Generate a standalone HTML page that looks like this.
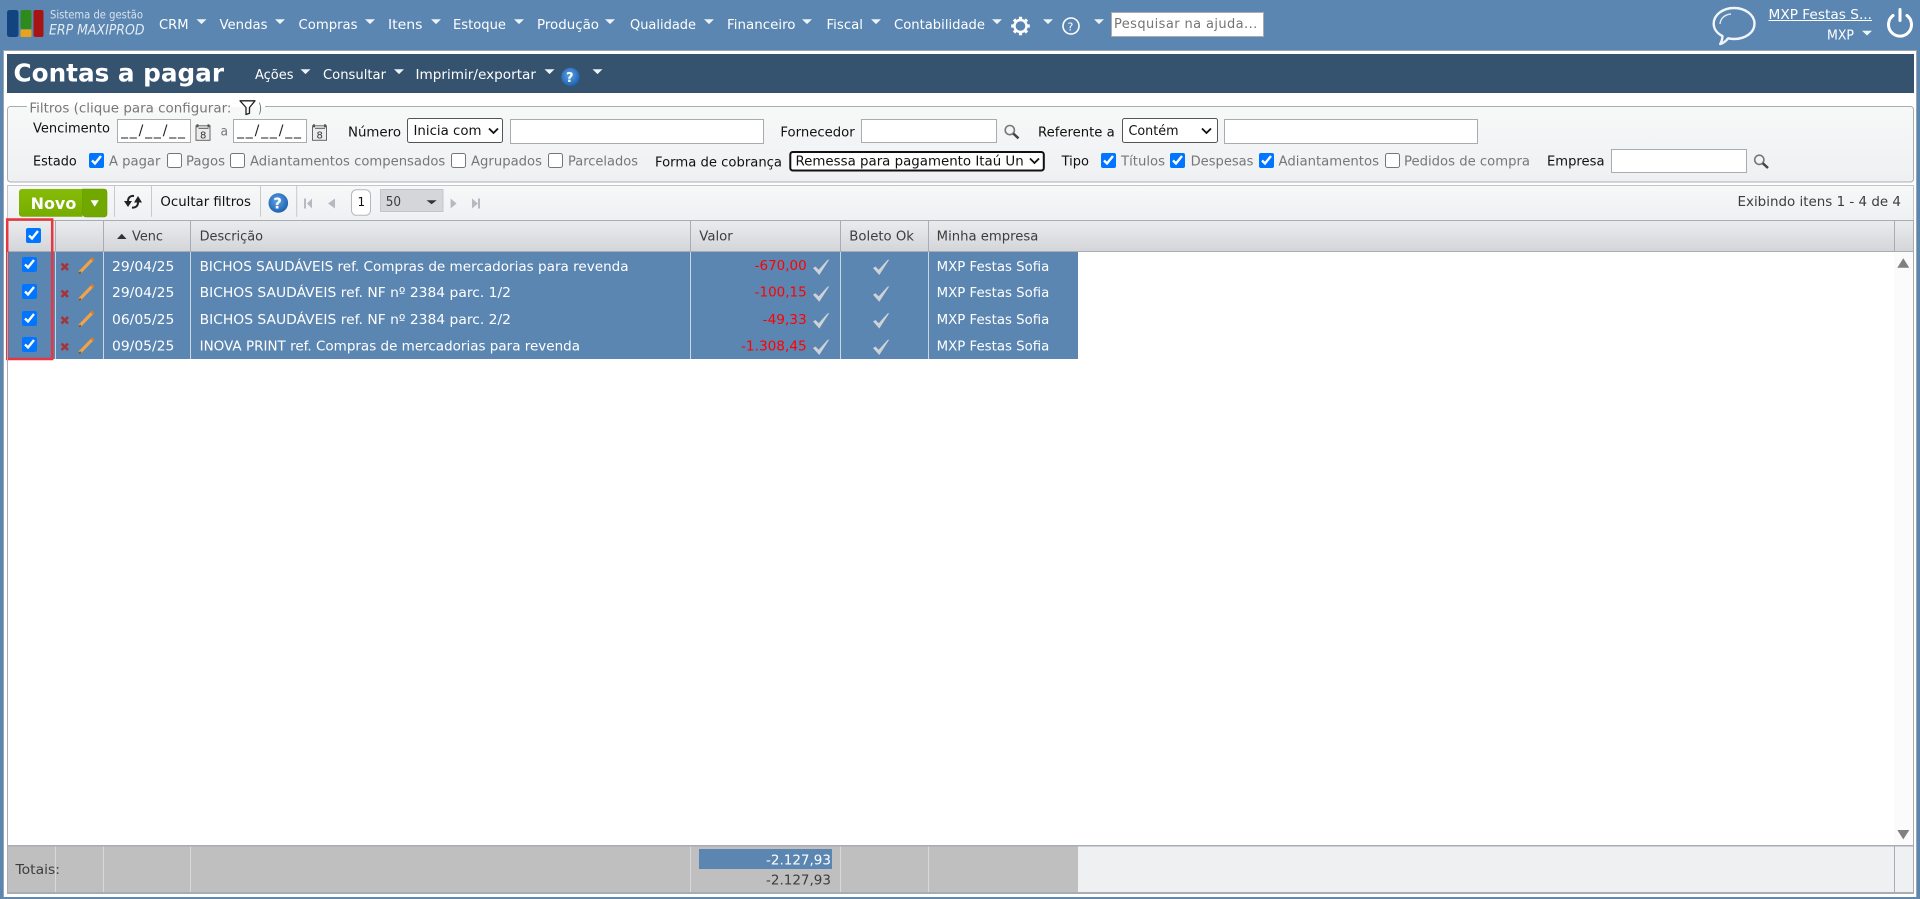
<!DOCTYPE html>
<html lang="pt-BR"><head><meta charset="utf-8"><title>Contas a pagar</title>
<style>
html,body{margin:0;padding:0;background:#5b86b2;width:1920px;height:899px;overflow:hidden}
#s{position:absolute;left:0;top:0}
text{font-family:"DejaVu Sans","Liberation Sans",sans-serif;font-size:13px}
.w{fill:#fff}.k{fill:#111}.g{fill:#777}.d{fill:#3d3d3d}.r{fill:#ff0000}
input{position:absolute;margin:0;box-sizing:border-box}
input[type=checkbox]{width:15px;height:15px}
input.i{background:#fff;border:1px solid #a9abae;border-radius:0;outline:0;padding:0 3px;font:13px "DejaVu Sans",sans-serif;color:#222}
</style></head><body>
<svg id="s" width="1920" height="899" viewBox="0 0 1920 899" xmlns="http://www.w3.org/2000/svg">
<defs>
<linearGradient id="hd" x1="0" y1="0" x2="0" y2="1"><stop offset="0" stop-color="#ebecee"/><stop offset="1" stop-color="#d3d5d9"/></linearGradient>
<linearGradient id="fs" x1="0" y1="0" x2="0" y2="1"><stop offset="0" stop-color="#f7f8f8"/><stop offset="1" stop-color="#eff0f2"/></linearGradient>
<radialGradient id="hb" cx=".45" cy=".4" r=".6"><stop offset="0" stop-color="#5fa3e6"/><stop offset="1" stop-color="#1c62b0"/></radialGradient>
<linearGradient id="gn" x1="0" y1="0" x2="0" y2="1"><stop offset="0" stop-color="#86bc06"/><stop offset="1" stop-color="#76ac00"/></linearGradient>
<filter id="bl" x="-20%" y="-20%" width="140%" height="140%"><feGaussianBlur stdDeviation=".35"/></filter>
<g id="ar"><path d="M0 0h10l-5 4.800z" fill="#eef3f8"/></g>
<g id="cal"><rect x=".5" y="1.500" width="14" height="14.500" fill="#ececec" stroke="#666"/><rect x="1" y="0" width="2" height="3" fill="#555"/><rect x="12" y="0" width="2" height="3" fill="#555"/><path d="M3 4h10" stroke="#555" stroke-width="1"/><text x="4.500" y="14" style="font-size:10px" fill="#333">8</text></g>
<g id="mag"><circle cx="5.800" cy="5.800" r="4.600" fill="#f3f6f8" stroke="#777" stroke-width="1.600"/><path d="M9.300 9.300l5.200 4.700" stroke="#444" stroke-width="2.500"/></g>
<g id="x"><path d="M1 1l6.500 6.500M7.500 1L1 7.500" stroke="#a5343a" stroke-width="2.600"/></g>
<g id="pen"><path d="M1.500 15L15 1" stroke="#f0a348" stroke-width="3.200"/><path d="M1 15.500l2-1" stroke="#7a5a30" stroke-width="2"/><path d="M13.600 2.400L15.400 .6" stroke="#e2791c" stroke-width="3"/></g>
<g id="tk"><path d="M.5 9.500l2.500-1.500 3.200 3.200L15 1.500l1.800-.5L6.800 16.500z" fill="#cfd2d6" filter="url(#bl)"/></g>
</defs>
<rect width="1920" height="899" fill="#5b86b2"/>
<rect x="4" y="50" width="1913" height="847" fill="#fff"/>
<rect x="3.500" y="50.500" width="1913" height="847" fill="none" stroke="#9aa5b0"/>
<rect y="897" width="1920" height="2" fill="#6288ad"/>

<!-- logo -->
<rect x="7" y="10" width="11.500" height="27" rx="2.500" fill="#12457f"/>
<rect x="20.500" y="10" width="11" height="19" rx="2" fill="#2f8a1e"/>
<rect x="20.500" y="29.500" width="11" height="7.500" rx="1" fill="#e4a51c"/>
<rect x="33.500" y="10" width="10" height="27" rx="2" fill="#a81414"/>
<text x="50" y="18.500" textLength="93" lengthAdjust="spacingAndGlyphs" style="font-size:11.500px" fill="#d7e2ec">Sistema de gestão</text>
<text x="49" y="34.500" textLength="95.500" lengthAdjust="spacingAndGlyphs" style="font-size:14px;font-style:italic" fill="#e4ecf3">ERP MAXIPROD</text>

<!-- menu -->
<g class="w">
<text x="159" y="29" textLength="29.500" lengthAdjust="spacingAndGlyphs">CRM</text>
<text x="219.500" y="29" textLength="48" lengthAdjust="spacingAndGlyphs">Vendas</text>
<text x="298.500" y="29" textLength="59" lengthAdjust="spacingAndGlyphs">Compras</text>
<text x="388" y="29" textLength="34.500" lengthAdjust="spacingAndGlyphs">Itens</text>
<text x="453" y="29" textLength="53" lengthAdjust="spacingAndGlyphs">Estoque</text>
<text x="537" y="29" textLength="62" lengthAdjust="spacingAndGlyphs">Produção</text>
<text x="630" y="29" textLength="66" lengthAdjust="spacingAndGlyphs">Qualidade</text>
<text x="727" y="29" textLength="68.500" lengthAdjust="spacingAndGlyphs">Financeiro</text>
<text x="826.500" y="29" textLength="36.500" lengthAdjust="spacingAndGlyphs">Fiscal</text>
<text x="894" y="29" textLength="91" lengthAdjust="spacingAndGlyphs">Contabilidade</text>
</g>
<use href="#ar" x="196.500" y="19.300"/><use href="#ar" x="275" y="19.300"/><use href="#ar" x="365" y="19.300"/><use href="#ar" x="431" y="19.300"/><use href="#ar" x="514" y="19.300"/><use href="#ar" x="605" y="19.300"/><use href="#ar" x="704" y="19.300"/><use href="#ar" x="802" y="19.300"/><use href="#ar" x="871" y="19.300"/><use href="#ar" x="992" y="19.300"/><use href="#ar" x="1043" y="19.300"/><use href="#ar" x="1094" y="19.300"/>
<!-- gear -->
<circle cx="1020.500" cy="26" r="6" fill="none" stroke="#fff" stroke-width="2.400"/>
<g stroke="#fff" stroke-width="3.200"><path d="M1020.500 16.700v3.600M1020.500 31.700v3.600M1011.200 26h3.600M1026.200 26h3.600M1014 19.500l2.500 2.500M1024.500 30l2.500 2.500M1014 32.500l2.500-2.500M1024.500 22l2.500-2.500"/></g>
<!-- help -->
<circle cx="1071" cy="26" r="8" fill="none" stroke="#fff" stroke-width="1.600"/>
<text x="1067.500" y="30.500" style="font-size:11px" class="w">?</text>
<!-- chat -->
<path d="M1734 8c11.500 0 20.500 7 20.500 15.700S1745.500 39 1734 39c-2 0-4-.2-5.800-.7-2 2.500-5 5-8 5.700 1.200-2 2.200-5 2.200-8-5.500-2.800-8.700-7.300-8.700-12.300C1713.700 15 1722.500 8 1734 8z" fill="none" stroke="#f1f5f9" stroke-width="2.400" stroke-linejoin="round"/>
<path d="M1720 24c.5-6 5-9.500 11-10" fill="none" stroke="#dfe8f0" stroke-width="1.400"/>
<!-- user -->
<text x="1768.500" y="19" textLength="103.500" lengthAdjust="spacingAndGlyphs" class="w">MXP Festas S...</text>
<rect x="1768.500" y="20" width="103.500" height="1" fill="#fff"/>
<text x="1827" y="39.300" textLength="27" lengthAdjust="spacingAndGlyphs" class="w">MXP</text>
<use href="#ar" x="1862" y="30.700"/>
<!-- power -->
<path d="M1893 15.500a11.500 11.500 0 1 0 14 0" fill="none" stroke="#fff" stroke-width="3" stroke-linecap="round"/>
<path d="M1900 9.500v11" stroke="#fff" stroke-width="3" stroke-linecap="round"/>

<!-- title bar -->
<rect x="7" y="54" width="1907" height="39" fill="#35526f"/>
<text x="13.500" y="81.700" textLength="210.500" lengthAdjust="spacingAndGlyphs" style="font-size:25px;font-weight:bold" class="w">Contas a pagar</text>
<text x="255" y="79" textLength="38.500" lengthAdjust="spacingAndGlyphs" class="w">Ações</text>
<text x="323" y="79" textLength="63" lengthAdjust="spacingAndGlyphs" class="w">Consultar</text>
<text x="415.500" y="79" textLength="120.500" lengthAdjust="spacingAndGlyphs" class="w">Imprimir/exportar</text>
<use href="#ar" x="300.500" y="69.300"/><use href="#ar" x="394" y="69.300"/><use href="#ar" x="544.500" y="69.300"/><use href="#ar" x="592.500" y="69.300"/>
<circle cx="570.500" cy="77" r="9.200" fill="url(#hb)"/>
<text x="566" y="82" style="font-size:13px;font-weight:bold" class="w">?</text>

<!-- filters -->
<rect x="7.500" y="106.500" width="1906" height="75.500" rx="3" fill="url(#fs)" stroke="#a8adb5"/>
<rect x="27" y="100" width="238" height="8" fill="#fff"/>
<rect x="27" y="107" width="238" height="8" fill="#f7f8f8"/>
<text x="29.400" y="112.700" textLength="202" lengthAdjust="spacingAndGlyphs" class="g">Filtros (clique para configurar:</text>
<path d="M240 100.800h15l-5.500 6.700v5.800l-3.500 1.200v-7z" fill="none" stroke="#222" stroke-width="1.300" stroke-linejoin="round"/>
<text x="258" y="112.700" textLength="4" lengthAdjust="spacingAndGlyphs" class="g">)</text>
<text x="33" y="132.700" textLength="77" lengthAdjust="spacingAndGlyphs" class="k">Vencimento</text>
<use href="#cal" x="195.500" y="124.300"/>
<text x="220.500" y="135.700" textLength="7.500" lengthAdjust="spacingAndGlyphs" class="g">a</text>
<use href="#cal" x="312" y="124.300"/>
<text x="348" y="136.700" textLength="53" lengthAdjust="spacingAndGlyphs" class="k">Número</text>
<text x="780.400" y="136.700" textLength="74.300" lengthAdjust="spacingAndGlyphs" class="k">Fornecedor</text>
<use href="#mag" x="1004" y="124.300"/>
<text x="1038" y="136.700" textLength="76.700" lengthAdjust="spacingAndGlyphs" class="k">Referente a</text>
<!-- select: Inicia com -->
<rect x="407.500" y="118.500" width="95" height="24" rx="2" fill="#fff" stroke="#555"/>
<text x="413.500" y="135" textLength="68" lengthAdjust="spacingAndGlyphs" class="k">Inicia com</text>
<path d="M489 128.500l4.500 4.500 4.500-4.500" fill="none" stroke="#111" stroke-width="1.800"/>
<!-- select: Contém -->
<rect x="1122.500" y="118.500" width="95" height="24" rx="2" fill="#fff" stroke="#555"/>
<text x="1128.500" y="135" textLength="50" lengthAdjust="spacingAndGlyphs" class="k">Contém</text>
<path d="M1202 128.500l4.500 4.500 4.500-4.500" fill="none" stroke="#111" stroke-width="1.800"/>

<text x="33" y="165.700" textLength="43.700" lengthAdjust="spacingAndGlyphs" class="k">Estado</text>
<text x="109" y="165.700" textLength="51.400" lengthAdjust="spacingAndGlyphs" class="g">A pagar</text>
<text x="186" y="165.700" textLength="39" lengthAdjust="spacingAndGlyphs" class="g">Pagos</text>
<text x="250" y="165.700" textLength="195.300" lengthAdjust="spacingAndGlyphs" class="g">Adiantamentos compensados</text>
<text x="471" y="165.700" textLength="71" lengthAdjust="spacingAndGlyphs" class="g">Agrupados</text>
<text x="568" y="165.700" textLength="70" lengthAdjust="spacingAndGlyphs" class="g">Parcelados</text>
<text x="655" y="166.700" textLength="127" lengthAdjust="spacingAndGlyphs" class="k">Forma de cobrança</text>
<!-- select: forma -->
<rect x="790.300" y="152" width="253.500" height="18.500" rx="2.500" fill="#fff" stroke="#101010" stroke-width="2"/>
<text x="795.500" y="165.500" textLength="228.200" lengthAdjust="spacingAndGlyphs" class="k">Remessa para pagamento Itaú Un</text>
<path d="M1030 158.500l4.500 4.500 4.500-4.500" fill="none" stroke="#111" stroke-width="1.800"/>
<text x="1061.600" y="165.700" textLength="27.400" lengthAdjust="spacingAndGlyphs" class="k">Tipo</text>
<text x="1121" y="165.700" textLength="44" lengthAdjust="spacingAndGlyphs" class="g">Títulos</text>
<text x="1190.600" y="165.700" textLength="62.900" lengthAdjust="spacingAndGlyphs" class="g">Despesas</text>
<text x="1278.500" y="165.700" textLength="100.500" lengthAdjust="spacingAndGlyphs" class="g">Adiantamentos</text>
<text x="1404" y="165.700" textLength="126" lengthAdjust="spacingAndGlyphs" class="g">Pedidos de compra</text>
<text x="1547" y="165.700" textLength="57.500" lengthAdjust="spacingAndGlyphs" class="k">Empresa</text>
<use href="#mag" x="1753.500" y="154"/>

<!-- toolbar -->
<rect x="7.500" y="185.500" width="1906" height="35" fill="url(#fs)" stroke="#c2c6cc"/>
<path d="M19 192a3 3 0 0 1 3-3h60.500v27.700H22a3 3 0 0 1-3-3z" fill="url(#gn)"/>
<path d="M82.500 189H104a3 3 0 0 1 3 3v22a3 3 0 0 1-3 3H86a3.500 3.500 0 0 1-3.500-3.500z" fill="#70a800" stroke="#689d00" stroke-width=".6"/>
<text x="30.600" y="209" textLength="45.700" lengthAdjust="spacingAndGlyphs" style="font-size:16px;font-weight:bold" class="w">Novo</text>
<path d="M90.600 200.300h8.200l-4.100 6.500z" fill="#fff"/>
<g stroke="#c6c9ce"><path d="M114.500 185v31.700M151.500 185v31.700M260.500 185v31.700M296.700 185v31.700"/></g>
<!-- refresh -->
<path d="M128 201c0-3.500 2.500-5.500 6-5" fill="none" stroke="#222" stroke-width="2"/>
<path d="M124 201h8l-4 6z" fill="#222"/>
<path d="M138 202.500c0 3.500-2.500 5.500-6 5" fill="none" stroke="#222" stroke-width="2"/>
<path d="M134 202.500h8l-4-6.500z" fill="#222"/>
<text x="160.400" y="206" textLength="90.600" lengthAdjust="spacingAndGlyphs" class="k">Ocultar filtros</text>
<circle cx="278.300" cy="203" r="9.800" fill="url(#hb)"/>
<text x="273.300" y="208.500" style="font-size:15px;font-weight:bold" class="w">?</text>
<g fill="#b6bac0"><rect x="304" y="198.500" width="2" height="10"/><path d="M312 198.500v10l-5-5zM335 198.500v10l-7-5z"/><path d="M450.600 198.500v10l6-5zM472 198.500v10l6-5z"/><rect x="478" y="198.500" width="2" height="10"/></g>
<rect x="351.500" y="189.800" width="19" height="25.500" rx="5" fill="#fff" stroke="#b5b8bc"/>
<text x="357.500" y="206" class="k" style="font-size:12px">1</text>
<rect x="380.500" y="189.500" width="62.500" height="22" fill="#d4d6da" stroke="#c3c5c9"/>
<text x="385.700" y="206" textLength="15.300" lengthAdjust="spacingAndGlyphs" class="d">50</text>
<path d="M426.500 200.300h10.200l-5.100 4z" fill="#333"/>
<text x="1737.500" y="206" textLength="163.500" lengthAdjust="spacingAndGlyphs" class="d">Exibindo itens 1 - 4 de 4</text>

<!-- table header -->
<rect x="7.500" y="220.500" width="1906" height="31" fill="url(#hd)" stroke="#a8adb5"/>
<g stroke="#a8adb5"><path d="M55.500 221v30M103.500 221v30M190.500 221v30M690.500 221v30M840.500 221v30M928.500 221v30M1894.500 221v30"/></g>
<path d="M117 239h9.500l-4.750-5.300z" fill="#333"/>
<text x="132" y="240.700" textLength="31" lengthAdjust="spacingAndGlyphs" class="d">Venc</text>
<text x="199.600" y="240.700" textLength="63.400" lengthAdjust="spacingAndGlyphs" class="d">Descrição</text>
<text x="699.300" y="240.700" textLength="33.400" lengthAdjust="spacingAndGlyphs" class="d">Valor</text>
<text x="849.300" y="240.700" textLength="64.700" lengthAdjust="spacingAndGlyphs" class="d">Boleto Ok</text>
<text x="936.700" y="240.700" textLength="101.600" lengthAdjust="spacingAndGlyphs" class="d">Minha empresa</text>

<!-- rows -->
<rect x="8" y="252" width="1070" height="107" fill="#5b86b2"/>
<rect x="1894" y="252" width="19" height="593" fill="#fbfbfb"/>
<g stroke="#ccd6e0"><path d="M55.500 252v107M103.500 252v107M190.500 252v107M690.500 252v107M840.500 252v107M928.500 252v107"/></g>
<use href="#x" x="60.500" y="262.500"/><use href="#x" x="60.500" y="289.500"/><use href="#x" x="60.500" y="316"/><use href="#x" x="60.500" y="342.500"/>
<use href="#pen" x="78" y="257.700"/><use href="#pen" x="78" y="284.400"/><use href="#pen" x="78" y="311"/><use href="#pen" x="78" y="337.700"/>
<g class="w">
<text x="112" y="271" textLength="62.300" lengthAdjust="spacingAndGlyphs">29/04/25</text>
<text x="112" y="297" textLength="62.300" lengthAdjust="spacingAndGlyphs">29/04/25</text>
<text x="112" y="324" textLength="62.300" lengthAdjust="spacingAndGlyphs">06/05/25</text>
<text x="112" y="350.700" textLength="62.300" lengthAdjust="spacingAndGlyphs">09/05/25</text>
<text x="199.600" y="271" textLength="429" lengthAdjust="spacingAndGlyphs">BICHOS SAUDÁVEIS ref. Compras de mercadorias para revenda</text>
<text x="199.600" y="297" textLength="311.400" lengthAdjust="spacingAndGlyphs">BICHOS SAUDÁVEIS ref. NF nº 2384 parc. 1/2</text>
<text x="199.600" y="324" textLength="311.400" lengthAdjust="spacingAndGlyphs">BICHOS SAUDÁVEIS ref. NF nº 2384 parc. 2/2</text>
<text x="199.600" y="350.700" textLength="380.400" lengthAdjust="spacingAndGlyphs">INOVA PRINT ref. Compras de mercadorias para revenda</text>
<text x="936.700" y="271" textLength="112.600" lengthAdjust="spacingAndGlyphs">MXP Festas Sofia</text>
<text x="936.700" y="297" textLength="112.600" lengthAdjust="spacingAndGlyphs">MXP Festas Sofia</text>
<text x="936.700" y="324" textLength="112.600" lengthAdjust="spacingAndGlyphs">MXP Festas Sofia</text>
<text x="936.700" y="350.700" textLength="112.600" lengthAdjust="spacingAndGlyphs">MXP Festas Sofia</text>
</g>
<g class="r">
<text x="754.700" y="270" textLength="52" lengthAdjust="spacingAndGlyphs">-670,00</text>
<text x="754.700" y="296.700" textLength="52" lengthAdjust="spacingAndGlyphs">-100,15</text>
<text x="762.700" y="324" textLength="44" lengthAdjust="spacingAndGlyphs">-49,33</text>
<text x="741" y="350.700" textLength="65.700" lengthAdjust="spacingAndGlyphs">-1.308,45</text>
</g>
<use href="#tk" x="812.500" y="258.500"/><use href="#tk" x="812.500" y="285.200"/><use href="#tk" x="812.500" y="312"/><use href="#tk" x="812.500" y="338.500"/>
<use href="#tk" x="872.500" y="258.500"/><use href="#tk" x="872.500" y="285.200"/><use href="#tk" x="872.500" y="312"/><use href="#tk" x="872.500" y="338.500"/>
<!-- red highlight -->
<rect x="7.200" y="219.500" width="45" height="139.500" fill="none" stroke="#e8353f" stroke-width="2.500"/>
<!-- scroll arrows -->
<path d="M1897.300 267.700h12l-6-9.400z" fill="#808080"/>
<path d="M1897.300 830h12l-6 9.400z" fill="#808080"/>

<!-- footer -->
<rect x="8" y="845" width="1905" height="47" fill="#eff0f2"/>
<rect x="8" y="845" width="1070" height="47" fill="#bfbfbf"/>
<g stroke="#d8d9db"><path d="M55.500 846v46M103.500 846v46M190.500 846v46M690.500 846v46M840.500 846v46M928.500 846v46"/></g>
<path d="M1894.500 846v46" stroke="#a8adb5"/>
<rect x="7" y="845" width="1907" height="1.500" fill="#a8adb5"/>
<rect x="7" y="892" width="1907" height="2" fill="#a8adb5"/>
<rect x="7" y="252" width="1" height="642" fill="#a8adb5"/>
<rect x="1913" y="252" width="1" height="642" fill="#a8adb5"/>
<rect x="699" y="849" width="133" height="20" fill="#5b86b2"/>
<text x="15.500" y="874" textLength="44.500" lengthAdjust="spacingAndGlyphs" class="d">Totais:</text>
<text x="766" y="864.500" textLength="65" lengthAdjust="spacingAndGlyphs" class="w">-2.127,93</text>
<text x="766" y="884.500" textLength="65" lengthAdjust="spacingAndGlyphs" class="d">-2.127,93</text>
</svg>

<input class="i" style="left:1111px;top:12px;width:153px;height:25px;padding:0 2px;letter-spacing:.4px" placeholder="Pesquisar na ajuda...">
<input class="i" style="left:117px;top:119px;width:74px;height:24px;font-size:14px;letter-spacing:1.800px" value="__/__/__">
<input class="i" style="left:233px;top:119px;width:74px;height:24px;font-size:14px;letter-spacing:1.800px" value="__/__/__">
<input class="i" style="left:510px;top:119px;width:254px;height:25px">
<input class="i" style="left:861px;top:119px;width:136px;height:24px">
<input class="i" style="left:1224px;top:119px;width:254px;height:25px">
<input class="i" style="left:1611px;top:149px;width:136px;height:24px">

<input type="checkbox" checked style="left:89px;top:153px">
<input type="checkbox" style="left:167px;top:153px">
<input type="checkbox" style="left:230px;top:153px">
<input type="checkbox" style="left:451px;top:153px">
<input type="checkbox" style="left:548px;top:153px">
<input type="checkbox" checked style="left:1101px;top:153px">
<input type="checkbox" checked style="left:1170px;top:153px">
<input type="checkbox" checked style="left:1259px;top:153px">
<input type="checkbox" style="left:1385px;top:153px">

<input type="checkbox" checked style="left:26px;top:228px">
<input type="checkbox" checked style="left:22px;top:257px">
<input type="checkbox" checked style="left:22px;top:284px">
<input type="checkbox" checked style="left:22px;top:311px">
<input type="checkbox" checked style="left:22px;top:337px">
</body></html>
